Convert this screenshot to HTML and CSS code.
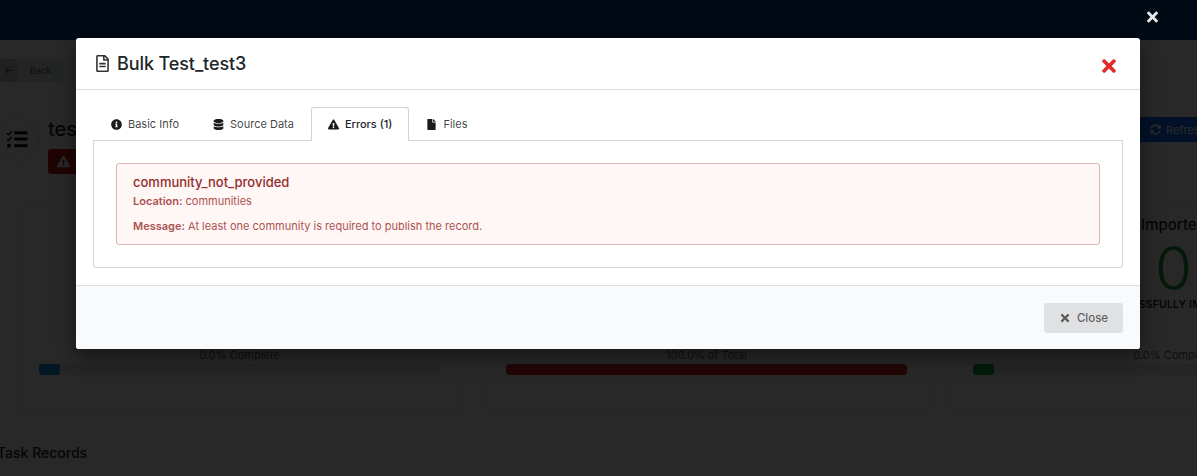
FILE: index.html
```html
<!DOCTYPE html>
<html lang="en">
<head>
<meta charset="utf-8">
<title>Bulk Test_test3</title>
<link rel="stylesheet" href="styles.css">
</head>
<body>
<div class="page">
  <header class="topbar"></header>
  <main class="content">
    <div class="back-row">
      <button class="back"><span class="back-icon"><svg class="i" viewBox="0 0 448 512"><path d="M190 66 40 232c-12 13-12 35 0 48l150 166 34-32L115 286h309v-60H115l109-128z"/></svg></span><span>Back</span></button>
    </div>
    <div class="task-head">
      <div class="avatar">
        <svg class="tasks" viewBox="0 0 24 20"><path d="M1 3.5 2.6 5 5.8 1.4M1 9.5 2.6 11 5.8 7.4" fill="none" stroke="currentColor" stroke-width="1.5"/><circle cx="3" cy="16.5" r="2"/><rect x="8.5" y="1.5" width="14" height="3"/><rect x="8.5" y="8" width="14" height="3"/><rect x="8.5" y="15" width="14" height="3"/></svg>
      </div>
      <div class="task-title">
        <h1>test</h1>
        <span class="badge"><svg class="i" viewBox="0 0 576 512"><path d="M569.517 440.013C587.975 472.007 564.806 512 527.94 512H48.054c-36.937 0-59.999-40.055-41.577-71.987L246.423 24.028c18.467-32.009 64.72-31.951 83.154 0l239.94 416.985zM288 354c-25.405 0-46 20.595-46 46s20.595 46 46 46 46-20.595 46-46-20.595-46-46-46zm-43.673-165.346l7.418 136c.347 6.364 5.609 11.346 11.982 11.346h48.546c6.373 0 11.635-4.982 11.982-11.346l7.418-136c.375-6.874-5.098-12.654-11.982-12.654h-63.383c-6.884 0-12.356 5.78-11.981 12.654z"/></svg></span>
      </div>
      <button class="refresh"><svg class="i" viewBox="0 0 512 512"><path d="M370.72 133.28C339.458 104.008 298.888 87.962 255.848 88c-77.458.068-144.328 53.178-162.791 126.85-1.344 5.363-6.122 9.15-11.651 9.15H24.103c-7.498 0-13.194-6.807-11.807-14.176C33.933 94.924 134.813 8 256 8c66.448 0 126.791 26.136 171.315 68.685L463.03 40.97C478.149 25.851 504 36.559 504 57.941V192c0 13.255-10.745 24-24 24H345.941c-21.382 0-32.09-25.851-16.971-40.971l41.75-41.749zM32 296h134.059c21.382 0 32.09 25.851 16.971 40.971l-41.75 41.75c31.262 29.273 71.835 45.319 114.876 45.28 77.418-.07 144.315-53.144 162.787-126.849 1.344-5.363 6.122-9.15 11.651-9.15h57.304c7.498 0 13.194 6.807 11.807 14.176C478.067 417.076 377.187 504 256 504c-66.448 0-126.791-26.136-171.315-68.685L48.97 471.03C33.851 486.149 8 475.441 8 454.059V320c0-13.255 10.745-24 24-24z"/></svg><span>Refresh</span></button>
    </div>
    <section class="cards">
      <article class="card">
        <p class="pct">0.0% Complete</p>
        <div class="bar"><div class="fill fill-blue"></div></div>
      </article>
      <article class="card">
        <p class="pct">100.0% of Total</p>
        <div class="bar"><div class="fill fill-red"></div></div>
      </article>
      <article class="card">
        <h3 class="card-title">Imported</h3>
        <div class="card-num">0</div>
        <div class="card-label">SUCCESSFULLY IMPORTED</div>
        <p class="pct pct-pushed">0.0% Complete</p>
        <div class="bar"><div class="fill fill-green"></div></div>
      </article>
    </section>
    <h2 class="records">Task Records</h2>
  </main>
</div>

<div class="backdrop"></div>
<svg class="overlay-x" viewBox="0 0 352 512"><path d="M242.72 256l100.07-100.07c12.28-12.28 12.28-32.19 0-44.48l-22.24-22.24c-12.28-12.28-32.19-12.28-44.48 0L176 189.28 75.93 89.21c-12.28-12.28-32.19-12.28-44.48 0L9.21 111.45c-12.28 12.28-12.28 32.19 0 44.48L109.28 256 9.21 356.07c-12.28 12.28-12.28 32.19 0 44.48l22.24 22.24c12.28 12.28 32.2 12.28 44.48 0L176 322.72l100.07 100.07c12.28 12.28 32.2 12.28 44.48 0l22.24-22.24c12.28-12.28 12.28-32.19 0-44.48L242.72 256z"/></svg>

<div class="modal">
  <div class="modal-head">
    <h2 class="modal-title"><svg class="i title-icon" viewBox="0 0 384 512"><path d="M288 248v28c0 6.6-5.4 12-12 12H108c-6.6 0-12-5.4-12-12v-28c0-6.6 5.4-12 12-12h168c6.6 0 12 5.4 12 12zm-12 72H108c-6.6 0-12 5.4-12 12v28c0 6.6 5.4 12 12 12h168c6.6 0 12-5.4 12-12v-28c0-6.6-5.4-12-12-12zm108-188.1V464c0 26.5-21.5 48-48 48H48c-26.5 0-48-21.5-48-48V48C0 21.5 21.5 0 48 0h204.1C264.8 0 277 5.1 286 14.1L369.9 98c9 8.9 14.1 21.2 14.1 33.9zm-128-80V128h76.1L256 51.9zM336 464V176H232c-13.3 0-24-10.7-24-24V48H48v416h288z"/></svg>Bulk Test_test3</h2>
    <svg class="modal-x" viewBox="0 0 352 512"><path d="M242.72 256l100.07-100.07c12.28-12.28 12.28-32.19 0-44.48l-22.24-22.24c-12.28-12.28-32.19-12.28-44.48 0L176 189.28 75.93 89.21c-12.28-12.28-32.19-12.28-44.48 0L9.21 111.45c-12.28 12.28-12.28 32.19 0 44.48L109.28 256 9.21 356.07c-12.28 12.28-12.28 32.19 0 44.48l22.24 22.24c12.28 12.28 32.2 12.28 44.48 0L176 322.72l100.07 100.07c12.28 12.28 32.2 12.28 44.48 0l22.24-22.24c12.28-12.28 12.28-32.19 0-44.48L242.72 256z"/></svg>
  </div>
  <div class="modal-body">
    <nav class="tabs">
      <a class="tab"><svg class="i" viewBox="0 0 512 512"><path d="M256 8C119.043 8 8 119.083 8 256c0 136.997 111.043 248 248 248s248-111.003 248-248C504 119.083 392.957 8 256 8zm0 110c23.196 0 42 18.804 42 42s-18.804 42-42 42-42-18.804-42-42 18.804-42 42-42zm56 254c0 6.627-5.373 12-12 12h-88c-6.627 0-12-5.373-12-12v-24c0-6.627 5.373-12 12-12h12v-64h-12c-6.627 0-12-5.373-12-12v-24c0-6.627 5.373-12 12-12h64c6.627 0 12 5.373 12 12v100h12c6.627 0 12 5.373 12 12v24z"/></svg>Basic Info</a>
      <a class="tab"><svg class="i" viewBox="0 0 448 512"><path d="M448 73.143v45.714C448 159.143 347.667 192 224 192S0 159.143 0 118.857V73.143C0 32.857 100.333 0 224 0s224 32.857 224 73.143zM448 176v102.857C448 319.143 347.667 352 224 352S0 319.143 0 278.857V176c48.125 33.143 136.208 48.572 224 48.572S399.874 209.143 448 176zm0 160v102.857C448 479.143 347.667 512 224 512S0 479.143 0 438.857V336c48.125 33.143 136.208 48.572 224 48.572S399.874 369.143 448 336z"/></svg>Source Data</a>
      <a class="tab tab-active"><svg class="i" viewBox="0 0 576 512"><path d="M569.517 440.013C587.975 472.007 564.806 512 527.94 512H48.054c-36.937 0-59.999-40.055-41.577-71.987L246.423 24.028c18.467-32.009 64.72-31.951 83.154 0l239.94 416.985zM288 354c-25.405 0-46 20.595-46 46s20.595 46 46 46 46-20.595 46-46-20.595-46-46-46zm-43.673-165.346l7.418 136c.347 6.364 5.609 11.346 11.982 11.346h48.546c6.373 0 11.635-4.982 11.982-11.346l7.418-136c.375-6.874-5.098-12.654-11.982-12.654h-63.383c-6.884 0-12.356 5.78-11.981 12.654z"/></svg>Errors (1)</a>
      <a class="tab"><svg class="i" viewBox="0 0 384 512"><path d="M224 136V0H24C10.7 0 0 10.7 0 24v464c0 13.3 10.7 24 24 24h336c13.3 0 24-10.7 24-24V160H248c-13.2 0-24-10.8-24-24zm160-14.1v6.1H256V0h6.1c6.4 0 12.5 2.5 17 7l97.9 98c4.5 4.5 7 10.6 7 16.9z"/></svg>Files</a>
    </nav>
    <div class="panel">
      <div class="error">
        <div class="error-title">community_not_provided</div>
        <p class="error-line"><strong>Location:</strong> communities</p>
        <p class="error-line error-msg"><strong>Message:</strong> At least one community is required to publish the record.</p>
      </div>
    </div>
  </div>
  <div class="modal-foot">
    <button class="close"><svg class="i" viewBox="0 0 352 512"><path d="M242.72 256l100.07-100.07c12.28-12.28 12.28-32.19 0-44.48l-22.24-22.24c-12.28-12.28-32.19-12.28-44.48 0L176 189.28 75.93 89.21c-12.28-12.28-32.19-12.28-44.48 0L9.21 111.45c-12.28 12.28-12.28 32.19 0 44.48L109.28 256 9.21 356.07c-12.28 12.28-12.28 32.19 0 44.48l22.24 22.24c12.28 12.28 32.2 12.28 44.48 0L176 322.72l100.07 100.07c12.28 12.28 32.2 12.28 44.48 0l22.24-22.24c12.28-12.28 12.28-32.19 0-44.48L242.72 256z"/></svg>Close</button>
  </div>
</div>
</body>
</html>
```
FILE: styles.css
```css
* { box-sizing: border-box; }
html, body { margin: 0; padding: 0; width: 1197px; height: 476px; overflow: hidden; }
body { font-family: Inter, "Liberation Sans", sans-serif; color: #212529; background: #fff; position: relative; }
.i { width: 1em; height: 1em; fill: currentColor; flex: none; }
button { font-family: inherit; border: 0; }

.page { width: 1197px; height: 476px; overflow: hidden; background: #fff; }
.topbar { height: 40px; background: #004080; }
.content { height: 436px; display: flex; flex-direction: column; }
.back-row { padding-top: 19px; height: 42px; }
.back { display: flex; align-items: stretch; height: 23px; width: 64px; padding: 0; background: #e0e1e2; color: rgba(0,0,0,.6); border-radius: 4px; font-size: 9px; font-weight: 500; }
.back-icon { width: 17px; display: flex; align-items: center; justify-content: center; background: #cacbcd; margin-right: 13px; border-radius: 4px 0 0 4px; font-size: 9px; }
.back span:last-child { align-self: center; }

.task-head { display: flex; height: 125px; padding-top: 35px; margin-left: -5px; position: relative; }
.avatar { width: 44px; height: 44px; margin-top: 0; border: 1px solid #ddd; border-radius: 50%; display: flex; align-items: center; justify-content: center; flex: none; }
.tasks { width: 23px; height: 19px; fill: #000; color: #000; margin-left: 0; }
.task-title { margin-left: 9px; }
.task-title h1 { margin: 0 0 8px; font-size: 20px; line-height: 24px; font-weight: 500; padding-top: 0; }
.badge { display: flex; align-items: center; width: 60px; height: 25px; background: #c81e1e; border-radius: 3px; color: #fff; padding-left: 9px; font-size: 13px; }
.refresh { margin-left: auto; display: flex; align-items: center; gap: 5px; width: 60px; height: 25px; background: #0d6efd; color: #fff; font-size: 11px; padding: 0 0 0 13px; border-radius: 3px 0 0 3px; white-space: nowrap; overflow: hidden; }

.cards { display: grid; grid-template-columns: repeat(3, 446px); gap: 21px; padding-left: 17px; height: 206px; }
.card { width: 446px; height: 206px; border: 1px solid #e8e8e8; border-radius: 5px; padding: 0 22px 37px 21px; display: flex; flex-direction: column; justify-content: flex-end; text-align: center; }
.card-title { margin: 0; font-size: 15px; line-height: 20px; font-weight: 500; position: relative; top: 0; }
.card-num { font-size: 60px; line-height: 54px; font-weight: 300; color: #16a34a; margin-top: 6px; }
.card-label { font-size: 10.5px; line-height: 14px; font-weight: 600; margin-top: 3px; letter-spacing: .2px; white-space: nowrap; }
.pct { margin: 0 0 2px; font-size: 11px; line-height: 14px; color: #666; }
.pct-pushed { margin-top: 36px; }
.bar { height: 11px; background: #ededed; border-radius: 3px; overflow: hidden; }
.fill { height: 100%; border-radius: 3px; }
.fill-blue { width: 21px; background: #0d8be0; }
.fill-red { width: 100%; background: #dc2626; }
.fill-green { width: 21px; background: #16a34a; }
.records { margin: 30px 0 0 -3px; font-size: 14px; line-height: 20px; font-weight: 500; }

.backdrop { position: absolute; inset: 0; background: rgba(0,0,0,.843); }
.overlay-x { position: absolute; left: 1147px; top: 9px; width: 11px; height: 16px; fill: #e6e6e6; }

.modal { position: absolute; left: 76px; top: 38px; width: 1064px; height: 311px; background: #fff; border-radius: 3px; box-shadow: 0 8px 20px rgba(0,0,0,.45); display: flex; flex-direction: column; }
.modal-head { height: 52px; flex: none; border-bottom: 1px solid #dedede; display: flex; align-items: center; justify-content: space-between; padding: 0 23px 0 19px; }
.modal-title { margin: 0; font-size: 18px; font-weight: 500; display: flex; align-items: center; color: #212529; letter-spacing: -.1px; }
.title-icon { width: 15px; height: 17px; margin-right: 7px; fill: #333; }
.modal-x { width: 16px; height: 20px; fill: #e12a2a; margin-top: 4px; }
.modal-body { flex: 1; padding: 17px 17px 0; }
.tabs { display: flex; height: 34px; padding-left: 1px; position: relative; z-index: 1; }
.tab { display: flex; align-items: center; gap: 6px; padding: 0 16px; font-size: 11px; color: rgba(0,0,0,.75); border: 1px solid transparent; }
.tab .i { font-size: 11px; color: #1b1b1b; }
.tab-active { background: #fff; border-color: #d4d4d5; border-bottom-color: #fff; border-radius: 3px 3px 0 0; font-weight: 500; color: #212529; }
.panel { height: 128px; margin-top: -1px; border: 1px solid #d4d4d5; border-radius: 0 0 3px 3px; padding: 22px; }
.error { height: 82px; background: #fff6f6; border: 1px solid #e0b4b4; border-radius: 3px; padding: 9px 16px; color: #9f3a38; box-shadow: 0 0 0 0 transparent; }
.error-title { font-size: 13px; line-height: 18px; font-weight: 500; color: #912d2b; }
.error-line { margin: 2px 0 0; font-size: 11px; line-height: 16px; opacity: .87; }
.error-msg { margin-top: 9px; }
.error-line strong { font-weight: 600; }
.modal-foot { height: 64px; flex: none; background: #f9fafb; border-top: 1px solid #dedede; display: flex; justify-content: flex-end; align-items: flex-start; padding: 17px 17px 0 0; border-radius: 0 0 3px 3px; }
.close { display: flex; align-items: center; justify-content: center; gap: 6px; width: 79px; height: 30px; background: #e0e1e2; color: rgba(0,0,0,.6); border-radius: 3px; font-size: 11.5px; font-weight: 500; }
.close .i { font-size: 12px; }
```
